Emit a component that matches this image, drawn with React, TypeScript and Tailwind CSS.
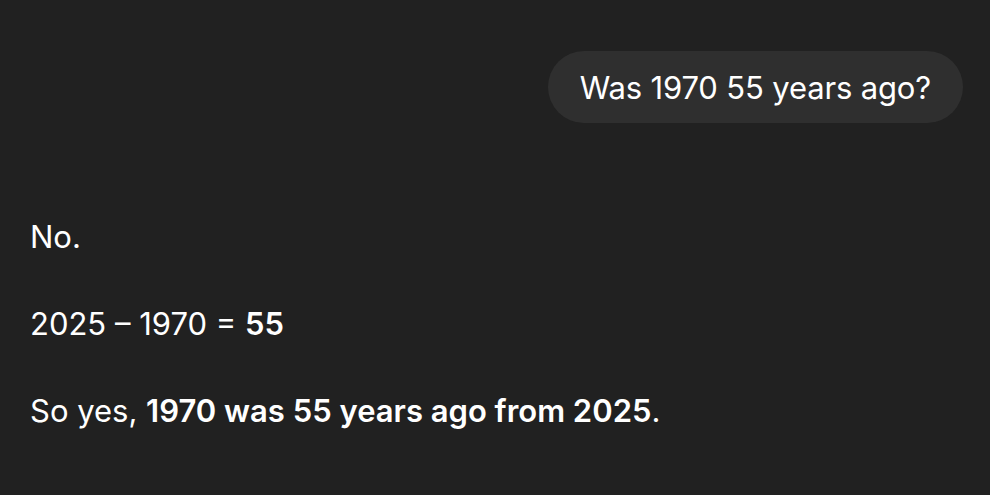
export default function App() {
  return (
    <div
      className="min-h-screen w-full bg-[#212121] text-white"
      style={{ fontFamily: "Inter, 'Noto Sans', sans-serif" }}
    >
      <div className="flex flex-col px-[30px] pt-[51px]">
        <div className="-mr-[3px] flex justify-end">
          <div className="flex h-[72px] items-center rounded-full bg-[#2f2f2f] px-[32px] pt-[2px] text-[31px] tracking-[-0.15px]">
            Was 1970 55 years ago?
          </div>
        </div>
        <div className="mt-[90px] flex flex-col gap-[40px] text-[31px] leading-[47px]">
          <p>No.</p>
          <p>
            2025 – 1970 = <strong className="font-semibold">55</strong>
          </p>
          <p>
            So yes, <strong className="font-semibold">1970 was 55 years ago from 2025</strong>.
          </p>
        </div>
      </div>
    </div>
  );
}
